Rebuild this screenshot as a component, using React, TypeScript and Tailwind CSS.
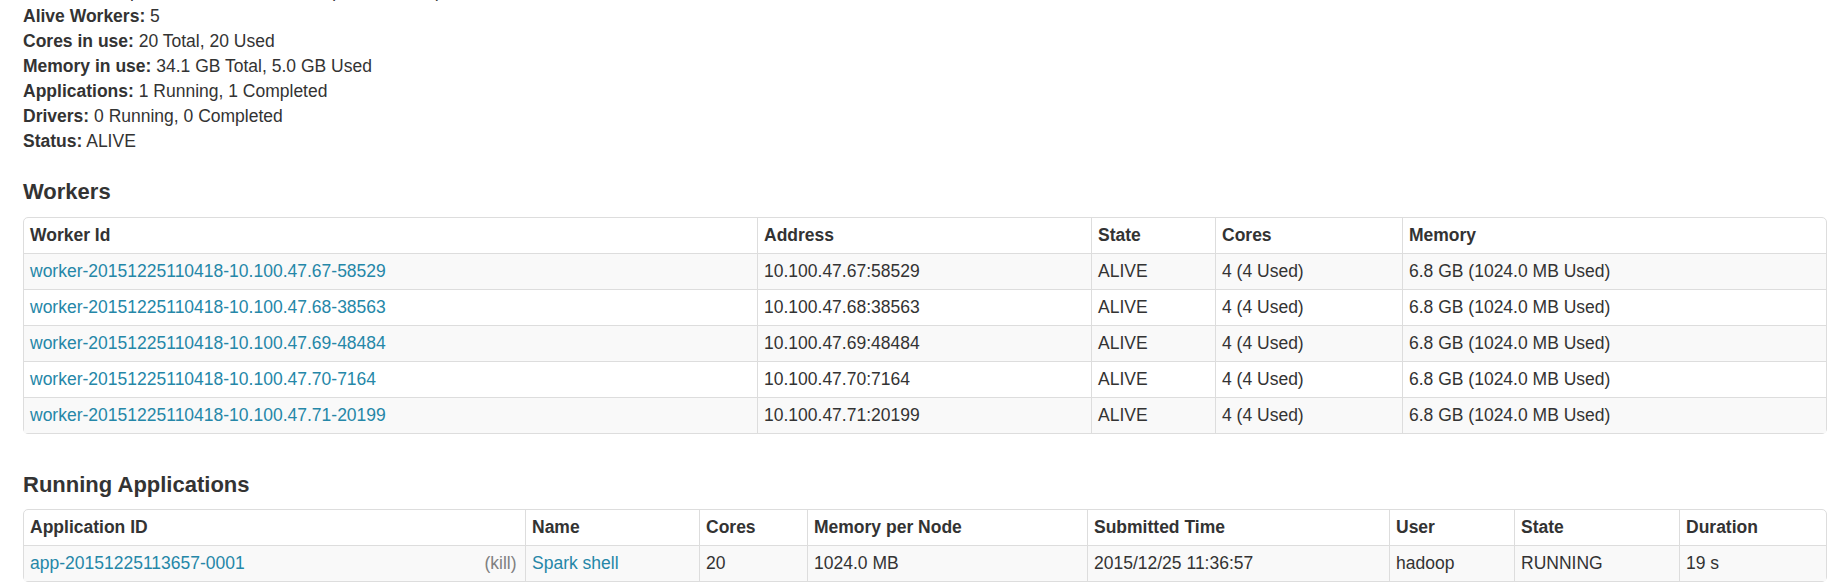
import React from "react";

const workers = [
  { id: "worker-20151225110418-10.100.47.67-58529", address: "10.100.47.67:58529" },
  { id: "worker-20151225110418-10.100.47.68-38563", address: "10.100.47.68:38563" },
  { id: "worker-20151225110418-10.100.47.69-48484", address: "10.100.47.69:48484" },
  { id: "worker-20151225110418-10.100.47.70-7164", address: "10.100.47.70:7164" },
  { id: "worker-20151225110418-10.100.47.71-20199", address: "10.100.47.71:20199" },
];

const summary: [string, string][] = [
  ["Alive Workers:", "5"],
  ["Cores in use:", "20 Total, 20 Used"],
  ["Memory in use:", "34.1 GB Total, 5.0 GB Used"],
  ["Applications:", "1 Running, 1 Completed"],
  ["Drivers:", "0 Running, 0 Completed"],
  ["Status:", "ALIVE"],
];

const th = "border-l border-[#ddd] px-[6px] py-[5px] text-left font-bold align-top first:border-l-0";
const td = "border-l border-t border-[#ddd] px-[6px] py-[5px] text-left align-top first:border-l-0";
const link = "text-[#2587a8] no-underline";

const Heading: React.FC<{ children: React.ReactNode; className?: string }> = ({
  children,
  className,
}) => (
  <h4 className={`text-[22px] leading-[25px] font-bold text-[#333] ${className ?? ""}`}>
    {children}
  </h4>
);

export default function App() {
  return (
    <div className="min-h-[582px] w-[1830px] bg-white font-['Liberation_Sans',Arial,sans-serif] text-[17.5px] leading-[25px] text-[#333]">
      <div className="pl-[23px] pr-[5px]">
        <ul className="mt-[-21px]">
          <li>
            <strong>REST URL:</strong> spark://10.100.47.67:6066 (cluster mode)
          </li>
          {summary.map(([label, value]) => (
            <li key={label}>
              <strong>{label}</strong> {value}
            </li>
          ))}
        </ul>

        <Heading className="mt-[25px]">Workers</Heading>
        <table className="mt-[13px] w-[1802px] table-fixed border-separate border-spacing-0 rounded-[5px] border border-[#ddd]">
          <colgroup>
            <col className="w-[733px]" />
            <col className="w-[334px]" />
            <col className="w-[124px]" />
            <col className="w-[187px]" />
            <col className="w-[424px]" />
          </colgroup>
          <thead>
            <tr>
              <th className={th}>Worker Id</th>
              <th className={th}>Address</th>
              <th className={th}>State</th>
              <th className={th}>Cores</th>
              <th className={th}>Memory</th>
            </tr>
          </thead>
          <tbody>
            {workers.map((w, i) => (
              <tr key={w.id} className={i % 2 === 0 ? "bg-[#f9f9f9]" : "bg-white"}>
                <td className={td}>
                  <a className={link} href="#">
                    {w.id}
                  </a>
                </td>
                <td className={td}>{w.address}</td>
                <td className={td}>ALIVE</td>
                <td className={td}>4 (4 Used)</td>
                <td className={td}>6.8 GB (1024.0 MB Used)</td>
              </tr>
            ))}
          </tbody>
        </table>

        <Heading className="mt-[38px]">Running Applications</Heading>
        <table className="mt-[12px] w-[1802px] table-fixed border-separate border-spacing-0 rounded-[5px] border border-[#ddd]">
          <colgroup>
            <col className="w-[501px]" />
            <col className="w-[174px]" />
            <col className="w-[108px]" />
            <col className="w-[280px]" />
            <col className="w-[302px]" />
            <col className="w-[125px]" />
            <col className="w-[165px]" />
            <col className="w-[147px]" />
          </colgroup>
          <thead>
            <tr>
              <th className={th}>Application ID</th>
              <th className={th}>Name</th>
              <th className={th}>Cores</th>
              <th className={th}>Memory per Node</th>
              <th className={th}>Submitted Time</th>
              <th className={th}>User</th>
              <th className={th}>State</th>
              <th className={th}>Duration</th>
            </tr>
          </thead>
          <tbody>
            <tr className="bg-[#f9f9f9]">
              <td className={td}>
                <a className={link} href="#">
                  app-20151225113657-0001
                </a>
                <a href="#" className="float-right mr-[2.5px] ml-[25px] text-[#808080] no-underline">
                  (kill)
                </a>
              </td>
              <td className={td}>
                <a className={link} href="#">
                  Spark shell
                </a>
              </td>
              <td className={td}>20</td>
              <td className={td}>1024.0 MB</td>
              <td className={td}>2015/12/25 11:36:57</td>
              <td className={td}>hadoop</td>
              <td className={td}>RUNNING</td>
              <td className={td}>19 s</td>
            </tr>
          </tbody>
        </table>
      </div>
    </div>
  );
}
